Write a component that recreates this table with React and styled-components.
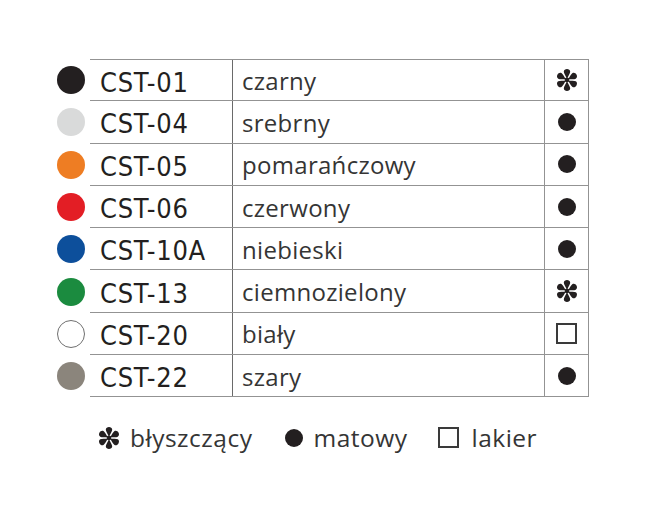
import React from 'react';
import styled, { createGlobalStyle } from 'styled-components';

const colors = [
  { code: 'CST-01', name: 'czarny', color: '#231f20', finish: 'gloss' },
  { code: 'CST-04', name: 'srebrny', color: '#d9dada', finish: 'matt' },
  { code: 'CST-05', name: 'pomarańczowy', color: '#ee7d23', finish: 'matt' },
  { code: 'CST-06', name: 'czerwony', color: '#e31e25', finish: 'matt' },
  { code: 'CST-10A', name: 'niebieski', color: '#0d4f9b', finish: 'matt' },
  { code: 'CST-13', name: 'ciemnozielony', color: '#1b8b3f', finish: 'gloss' },
  { code: 'CST-20', name: 'biały', color: '#ffffff', finish: 'lacquer' },
  { code: 'CST-22', name: 'szary', color: '#8b857c', finish: 'matt' },
];

const GlobalStyle = createGlobalStyle`
  body {
    margin: 0;
    background: #ffffff;
    font-family: "Open Sans", "Noto Sans", sans-serif;
  }
`;

const Page = styled.div`
  width: 650px;
  height: 511px;
  box-sizing: border-box;
  padding: 59px 0 0 57px;
  background: #ffffff;
`;

const Table = styled.div`
  display: flex;
  flex-direction: column;
`;

const Row = styled.div`
  display: flex;
  align-items: center;
  height: 42.3px;
`;

const Swatch = styled.span`
  width: 28px;
  height: 28px;
  border-radius: 50%;
  flex: none;
  box-sizing: border-box;
  background: ${p => p.$color};
  border: ${p => (p.$outlined ? '1.5px solid #6f6f6f' : 'none')};
  margin-right: 5px;
`;

const Cells = styled.div`
  display: grid;
  grid-template-columns: 143px 312px 44px;
  height: 100%;
  box-sizing: border-box;
  border-bottom: 1.5px solid #939393;
  border-top: ${p => (p.$first ? '1.5px solid #939393' : 'none')};
`;

const Code = styled.div`
  display: flex;
  align-items: center;
  padding: 4px 0 0 10px;
  font-family: "DejaVu Sans Condensed", "DejaVu Sans", sans-serif;
  font-size: 27px;
  letter-spacing: 0.7px;
  color: #231f20;
  border-right: 1.5px solid #6a6a6a;
`;

const Name = styled.div`
  display: flex;
  align-items: center;
  padding-left: 9px;
  padding-top: 1px;
  font-size: 24px;
  letter-spacing: 0.3px;
  color: #353535;
  border-right: 1.5px solid #939393;
`;

const Mark = styled.div`
  display: flex;
  align-items: center;
  justify-content: center;
  border-right: 1.5px solid #939393;
`;

const Dot = styled.span`
  width: 18px;
  height: 18px;
  border-radius: 50%;
  background: #231f20;
`;

const Square = styled.span`
  width: 21px;
  height: 21px;
  box-sizing: border-box;
  border: 2px solid #3a3a3a;
`;

const Legend = styled.div`
  display: flex;
  align-items: center;
  margin: 24px 0 0 41px;
  font-size: 24.5px;
  letter-spacing: 0.5px;
  color: #353535;
`;

const LegendItem = styled.div`
  display: flex;
  align-items: center;
  gap: ${p => p.$inner || 10}px;
  margin-right: ${p => p.$gap || 0}px;
`;

const Asterisk = ({ size = 22 }) => (
  <svg width={size} height={size} viewBox="-12 -12 24 24">
    {[0, 60, 120, 180, 240, 300].map(a => (
      <path
        key={a}
        transform={`rotate(${a})`}
        d="M0 -1.5 C-1.4 -4 -3.5 -7.5 -3.5 -9 C-3.5 -11 -1.7 -11.9 0 -11.9 C1.7 -11.9 3.5 -11 3.5 -9 C3.5 -7.5 1.4 -4 0 -1.5 Z"
        fill="#231f20"
      />
    ))}
    <circle r="2.6" fill="#231f20" />
  </svg>
);

const FinishMark = ({ finish }) => {
  if (finish === 'gloss') return <Asterisk />;
  if (finish === 'lacquer') return <Square />;
  return <Dot />;
};

export default function App() {
  return (
    <Page>
      <GlobalStyle />
      <Table>
        {colors.map((c, i) => (
          <Row key={c.code}>
            <Swatch $color={c.color} $outlined={c.color === '#ffffff'} />
            <Cells $first={i === 0}>
              <Code>{c.code}</Code>
              <Name>{c.name}</Name>
              <Mark>
                <FinishMark finish={c.finish} />
              </Mark>
            </Cells>
          </Row>
        ))}
      </Table>
      <Legend>
        <LegendItem $gap={33}>
          <Asterisk />
          <span>błyszczący</span>
        </LegendItem>
        <LegendItem $gap={31}>
          <Dot />
          <span>matowy</span>
        </LegendItem>
        <LegendItem $inner={12}>
          <Square />
          <span>lakier</span>
        </LegendItem>
      </Legend>
    </Page>
  );
}
